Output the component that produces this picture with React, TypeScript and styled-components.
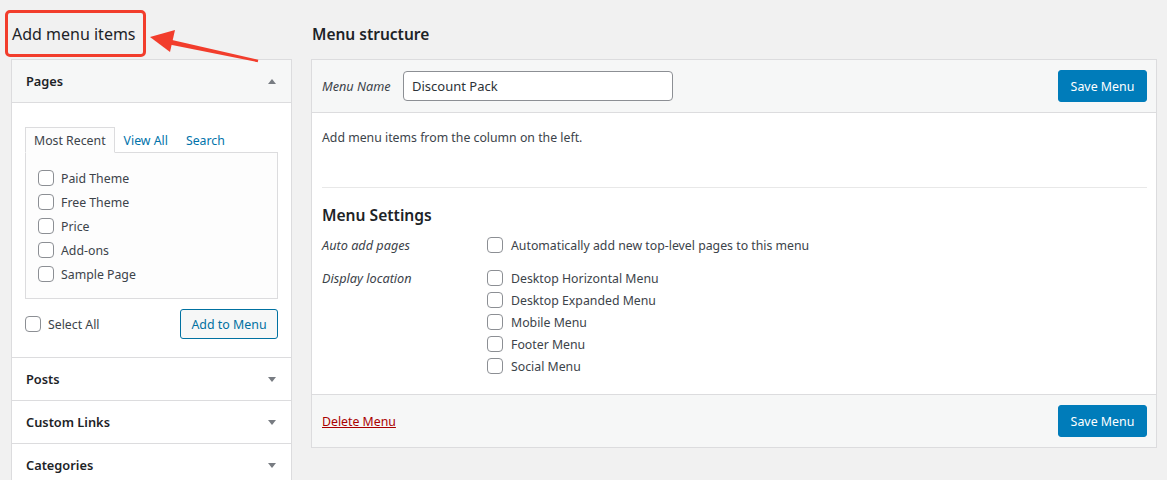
import styled, { createGlobalStyle } from "styled-components";

const GlobalStyle = createGlobalStyle`
  body {
    margin: 0;
    background: #f1f1f1;
    color: #3c434a;
    font-family: "Noto Sans", "Open Sans", sans-serif;
    font-size: 12.3px;
  }
  * { box-sizing: border-box; }
`;

const Page = styled.div`
  position: relative;
  display: flex;
  align-items: flex-start;
  gap: 19px;
  padding-left: 11px;
  height: 480px;
  overflow: hidden;
`;

const Column = styled.div<{ $width: number }>`
  flex: none;
  width: ${(p) => p.$width}px;
  display: flex;
  flex-direction: column;
`;

const HeadingRow = styled.div`
  flex: none;
  height: 59px;
  padding-top: 10px;
`;

const Heading = styled.h2<{ $marked?: boolean }>`
  margin: 0;
  height: 47px;
  display: flex;
  align-items: center;
  white-space: nowrap;
  font-size: ${(p) => (p.$marked ? 16 : 15.5)}px;
  font-weight: ${(p) => (p.$marked ? 400 : 600)};
  color: #1d2327;
  padding-left: 1px;
  ${(p) =>
    p.$marked &&
    `
    width: 141px;
    margin-left: -6px;
    padding-left: 4px;
    border: 3px solid #f23d2c;
    border-radius: 5px;
  `}
`;

const Arrow = styled.svg`
  position: absolute;
  left: 0;
  top: 0;
  pointer-events: none;
`;

const Box = styled.div`
  flex: none;
  background: #fff;
  border: 1px solid #dcdcde;
`;

const SectionHeader = styled.div<{ $open?: boolean }>`
  height: 43px;
  display: flex;
  align-items: center;
  justify-content: space-between;
  padding: 0 15px 0 14px;
  background: ${(p) => (p.$open ? "#f6f7f7" : "#fff")};
  border-bottom: 1px solid #dcdcde;
  font-size: 12.8px;
  font-weight: 600;
  color: #1d2327;
`;

const Caret = styled.span<{ $up?: boolean }>`
  width: 0;
  height: 0;
  border-left: 4px solid transparent;
  border-right: 4px solid transparent;
  ${(p) =>
    p.$up ? "border-bottom: 5px solid #787c82;" : "border-top: 5px solid #787c82;"}
`;

const SectionBody = styled.div`
  padding: 24px 13px 18px;
  border-bottom: 1px solid #dcdcde;
`;

const Tabs = styled.div`
  display: flex;
  height: 26px;
  margin-bottom: -1px;
  position: relative;
`;

const Tab = styled.span<{ $active?: boolean }>`
  display: flex;
  align-items: center;
  padding: 0 ${(p) => (p.$active ? 8 : 9)}px;
  color: ${(p) => (p.$active ? "#3c434a" : "#0073aa")};
  ${(p) =>
    p.$active &&
    `
    background: #fdfdfd;
    border: 1px solid #dcdcde;
    border-bottom-color: #fdfdfd;
  `}
`;

const TabPanel = styled.div`
  height: 147px;
  padding: 13px 12px 11px;
  background: #fdfdfd;
  border: 1px solid #dcdcde;
`;

const CheckRow = styled.label<{ $height: number; $gap?: number }>`
  display: flex;
  align-items: center;
  gap: ${(p) => p.$gap ?? 7}px;
  height: ${(p) => p.$height}px;
  white-space: nowrap;
  color: #3c434a;
`;

const Check = styled.input.attrs({ type: "checkbox" })`
  appearance: none;
  margin: 0;
  flex: none;
  width: 16px;
  height: 16px;
  background: #fff;
  border: 1px solid #8c8f94;
  border-radius: 4px;
`;

const ActionRow = styled.div`
  display: flex;
  align-items: center;
  justify-content: space-between;
  margin-top: 10px;
`;

const Button = styled.button<{ $primary?: boolean }>`
  height: ${(p) => (p.$primary ? 32 : 30)}px;
  padding: 0;
  font: inherit;
  font-size: 12.4px;
  white-space: nowrap;
  border-radius: 3px;
  border: 1px solid ${(p) => (p.$primary ? "#007cba" : "#0071a1")};
  background: ${(p) => (p.$primary ? "#007cba" : "#f6f7f7")};
  color: ${(p) => (p.$primary ? "#fff" : "#0071a1")};
  width: ${(p) => (p.$primary ? 89 : 98)}px;
`;

const Bar = styled.div`
  height: 53px;
  display: flex;
  align-items: center;
  padding: 0 9px 0 10px;
  background: #f6f7f7;
`;

const TopBar = styled(Bar)`
  border-bottom: 1px solid #dcdcde;
`;

const BottomBar = styled(Bar)`
  border-top: 1px solid #dcdcde;
  justify-content: space-between;
`;

const FieldLabel = styled.span`
  width: 81px;
  font-style: italic;
  font-size: 12.7px;
  color: #3c434a;
`;

const NameInput = styled.input`
  width: 270px;
  height: 30px;
  padding: 0 8px;
  border: 1px solid #8c8f94;
  border-radius: 4px;
  font: inherit;
  font-size: 13px;
  color: #2c3338;
  margin-right: auto;
`;

const Body = styled.div`
  padding: 15px 9px 17px 10px;
`;

const Hint = styled.p`
  margin: 0;
  line-height: 19px;
`;

const Divider = styled.hr`
  margin: 40px 0 0;
  border: 0;
  border-top: 1px solid #e8e8e8;
`;

const SubHeading = styled.h3`
  margin: 15px 0 7px;
  line-height: 24px;
  font-size: 15.6px;
  font-weight: 600;
  color: #1d2327;
`;

const SettingRow = styled.div`
  display: grid;
  grid-template-columns: 165px 1fr;
  & + & {
    margin-top: 11px;
  }
`;

const SettingLabel = styled.span`
  font-style: italic;
  font-size: 12.7px;
  line-height: 22px;
`;

const DeleteLink = styled.a`
  color: #a00;
  text-decoration: underline;
`;

const pages = ["Paid Theme", "Free Theme", "Price", "Add-ons", "Sample Page"];
const locations = [
  "Desktop Horizontal Menu",
  "Desktop Expanded Menu",
  "Mobile Menu",
  "Footer Menu",
  "Social Menu",
];

export default function App() {
  return (
    <>
      <GlobalStyle />
      <Page>
        <Column $width={281}>
          <HeadingRow>
            <Heading $marked>Add menu items</Heading>
          </HeadingRow>
          <Box>
            <SectionHeader $open>
              Pages <Caret $up />
            </SectionHeader>
            <SectionBody>
              <Tabs>
                <Tab $active>Most Recent</Tab>
                <Tab>View All</Tab>
                <Tab>Search</Tab>
              </Tabs>
              <TabPanel>
                {pages.map((p) => (
                  <CheckRow key={p} $height={24}>
                    <Check />
                    {p}
                  </CheckRow>
                ))}
              </TabPanel>
              <ActionRow>
                <CheckRow $height={30}>
                  <Check />
                  Select All
                </CheckRow>
                <Button>Add to Menu</Button>
              </ActionRow>
            </SectionBody>
            {["Posts", "Custom Links", "Categories"].map((t) => (
              <SectionHeader key={t}>
                {t} <Caret />
              </SectionHeader>
            ))}
          </Box>
        </Column>
        <Column $width={846}>
          <HeadingRow>
            <Heading>Menu structure</Heading>
          </HeadingRow>
          <Box>
            <TopBar>
              <FieldLabel>Menu Name</FieldLabel>
              <NameInput defaultValue="Discount Pack" />
              <Button $primary>Save Menu</Button>
            </TopBar>
            <Body>
              <Hint>Add menu items from the column on the left.</Hint>
              <Divider />
              <SubHeading>Menu Settings</SubHeading>
              <SettingRow>
                <SettingLabel>Auto add pages</SettingLabel>
                <CheckRow $height={22} $gap={8}>
                  <Check />
                  Automatically add new top-level pages to this menu
                </CheckRow>
              </SettingRow>
              <SettingRow>
                <SettingLabel>Display location</SettingLabel>
                <div>
                  {locations.map((l) => (
                    <CheckRow key={l} $height={22} $gap={8}>
                      <Check />
                      {l}
                    </CheckRow>
                  ))}
                </div>
              </SettingRow>
            </Body>
            <BottomBar>
              <DeleteLink>Delete Menu</DeleteLink>
              <Button $primary>Save Menu</Button>
            </BottomBar>
          </Box>
        </Column>
        <Arrow width="270" height="70" viewBox="0 0 270 70">
          <polygon points="165.5,38.6 258.3,59.8 257.7,62.2 164.5,43.4" fill="#f23d2c" />
          <polygon points="150,37 175,30 170,52" fill="#f23d2c" />
        </Arrow>
      </Page>
    </>
  );
}
